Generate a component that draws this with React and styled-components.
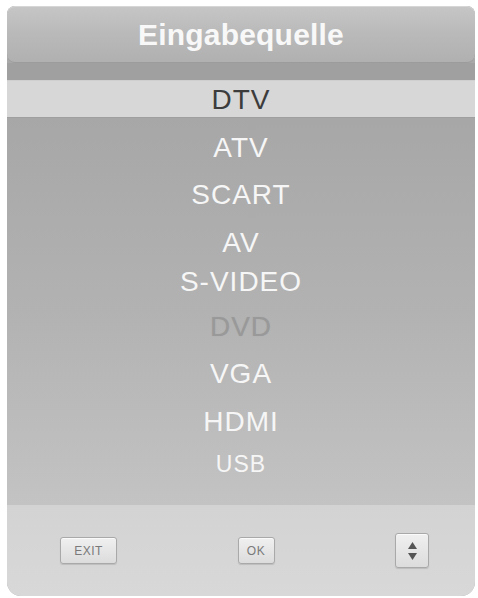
import styled, { createGlobalStyle } from "styled-components";

const GlobalStyle = createGlobalStyle`
  html, body {
    margin: 0;
    padding: 0;
    background: #ffffff;
  }
  body {
    font-family: "Liberation Sans", Arial, sans-serif;
  }
`;

const Page = styled.div`
  width: 478px;
  height: 598px;
  padding: 6px 3px 2px 7px;
  box-sizing: border-box;
`;

const Panel = styled.div`
  width: 468px;
  display: flex;
  flex-direction: column;
  border-radius: 8px 8px 14px 14px;
  overflow: hidden;
  background: #a9a9a9;
`;

const Header = styled.div`
  height: 57px;
  display: flex;
  align-items: center;
  justify-content: center;
  border-radius: 8px;
  background: linear-gradient(180deg, #c6c6c6 0%, #bababa 45%, #b0b0b0 100%);
  box-shadow: inset 0 1px 0 #d6d6d6, inset 0 -1px 0 #9c9c9c;
  color: #f8f8f8;
  font-size: 30px;
  font-weight: 700;
  letter-spacing: 0.2px;
`;

const Band = styled.div`
  height: 17px;
  background: #a0a0a0;
`;

const Selected = styled.div`
  height: 38px;
  line-height: 38px;
  text-align: center;
  background: #d7d7d7;
  border-top: 1px solid #cfcfcf;
  color: #3c3c3c;
  font-size: 28px;
  letter-spacing: 1px;
  box-sizing: border-box;
`;

const List = styled.div`
  display: flex;
  flex-direction: column;
  padding: 6px 0 31px;
  background: linear-gradient(180deg, #a7a7a7 0%, #b2b2b2 50%, #c3c3c3 100%);
  border-top: 1px solid #9f9f9f;
  margin-top: -1px;
`;

const Item = styled.div`
  height: ${(p) => p.$h}px;
  line-height: ${(p) => p.$h}px;
  text-align: center;
  font-size: ${(p) => p.$size || 28}px;
  letter-spacing: 1px;
  color: ${(p) => (p.$disabled ? "#999999" : "#f6f6f6")};
  text-shadow: ${(p) => (p.$disabled ? "0 0 1px #a5a5a5" : "none")};
  white-space: nowrap;
  overflow: visible;
`;

const Footer = styled.div`
  height: 91px;
  display: flex;
  align-items: center;
  justify-content: space-between;
  padding: 0 46px 0 53px;
  background: linear-gradient(180deg, #d3d3d3 0%, #d8d8d8 100%);
`;

const KeyButton = styled.div`
  width: ${(p) => p.$w}px;
  height: ${(p) => p.$hh || 27}px;
  display: flex;
  flex-direction: column;
  align-items: center;
  justify-content: center;
  gap: 4px;
  box-sizing: border-box;
  border: 1px solid #a9a9a9;
  border-radius: 3px;
  background: linear-gradient(180deg, #f0f0f0 0%, #dcdcdc 100%);
  box-shadow: 0 1px 1px #bdbdbd, inset 0 1px 0 #fafafa;
  color: #7a7a7a;
  font-size: 12px;
  letter-spacing: 0.5px;
`;

const Arrow = styled.svg`
  display: block;
`;

const items = [
  { label: "ATV", h: 48 },
  { label: "SCART", h: 46 },
  { label: "AV", h: 50 },
  { label: "S-VIDEO", h: 28 },
  { label: "DVD", h: 62, disabled: true },
  { label: "VGA", h: 32 },
  { label: "HDMI", h: 64 },
  { label: "USB", h: 20, size: 23 },
];

export default function App() {
  return (
    <>
      <GlobalStyle />
      <Page>
        <Panel>
          <Header>Eingabequelle</Header>
          <Band />
          <Selected>DTV</Selected>
          <List>
            {items.map((it) => (
              <Item key={it.label} $h={it.h} $size={it.size} $disabled={it.disabled}>
                {it.label}
              </Item>
            ))}
          </List>
          <Footer>
            <KeyButton $w={57}>EXIT</KeyButton>
            <KeyButton $w={37}>OK</KeyButton>
            <KeyButton $w={34} $hh={35}>
              <Arrow width="9" height="7" viewBox="0 0 9 7">
                <polygon points="4.5,0 9,7 0,7" fill="#555" />
              </Arrow>
              <Arrow width="9" height="7" viewBox="0 0 9 7">
                <polygon points="0,0 9,0 4.5,7" fill="#555" />
              </Arrow>
            </KeyButton>
          </Footer>
        </Panel>
      </Page>
    </>
  );
}
